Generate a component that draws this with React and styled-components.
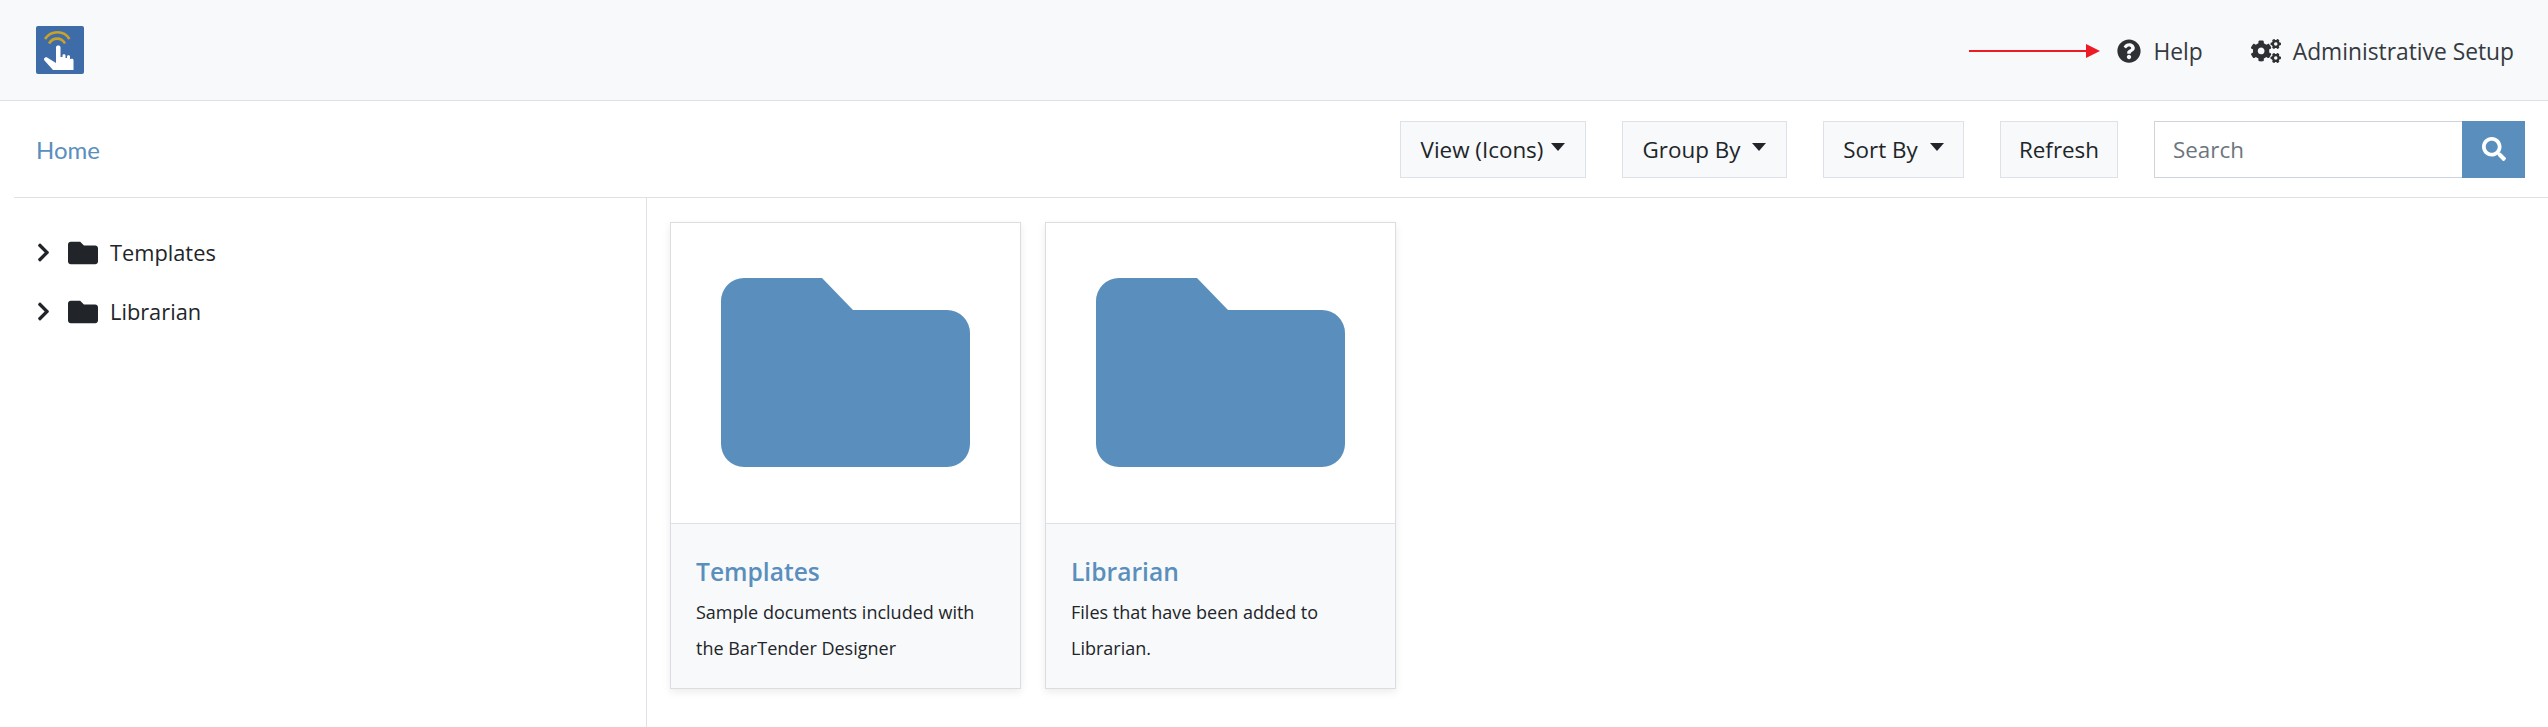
import React from "react";
import styled, { createGlobalStyle } from "styled-components";
import { FaChevronRight, FaFolder, FaQuestionCircle, FaCogs, FaSearch } from "react-icons/fa";

const GlobalStyle = createGlobalStyle`
  html, body {
    margin: 0;
    padding: 0;
    background: #fff;
    font-family: "Open Sans", "Noto Sans", sans-serif;
    color: #212529;
  }
`;

const folders = [
  {
    name: "Templates",
    lines: ["Sample documents included with", "the BarTender Designer"],
  },
  {
    name: "Librarian",
    lines: ["Files that have been added to", "Librarian."],
  },
];

function Logo() {
  return (
    <LogoBox>
      <svg width="48" height="48" viewBox="0 0 48 48">
        <rect width="48" height="48" rx="2" fill="#3e6ca8" />
        <g fill="none" stroke="#c9a227" strokeWidth="2.6">
          <path d="M9 13C15 4 28 4 33.500 13" />
          <path d="M13 17.500C17 11 25.500 11 29 17.500" />
        </g>
        <path
          d="M20 21.500c0-2.600 4.500-2.600 4.500 0V31h2v-1.500c0-1.800 3-1.800 3 0V32h1.500v-1.500c0-1.800 3-1.800 3 0V33l2-.3c1-.1 1.500.6 1.500 1.500V44H17L8.500 34.500c-1.500-2 1-4.300 3-2.800L20 37Z"
          fill="#fff"
        />
      </svg>
    </LogoBox>
  );
}

function Arrow() {
  return (
    <svg width="132" height="16" viewBox="0 0 132 16">
      <line x1="0" y1="8" x2="120" y2="8" stroke="#ed1c24" strokeWidth="2" />
      <polygon points="117,1 131,8 117,15" fill="#ed1c24" />
    </svg>
  );
}

function FolderShape() {
  return (
    <svg width="249" height="189" viewBox="0 0 249 189">
      <path
        d="M23 0H101L132 32H226A23 23 0 0 1 249 55V166A23 23 0 0 1 226 189H23A23 23 0 0 1 0 166V23A23 23 0 0 1 23 0Z"
        fill="#5a8fbd"
      />
    </svg>
  );
}

export default function App() {
  return (
    <Page>
      <GlobalStyle />
      <TopBar>
        <Logo />
        <TopActions>
          <Arrow />
          <TopLink>
            <FaQuestionCircle size={24} />
            Help
          </TopLink>
          <TopLink $wide>
            <FaCogs size={30} />
            Administrative Setup
          </TopLink>
        </TopActions>
      </TopBar>
      <ToolBar>
        <HomeLink>Home</HomeLink>
        <Tools>
          <ToolButton $width={186} $caretGap={8}>
            View (Icons)
            <Caret />
          </ToolButton>
          <ToolButton $width={165} $caretGap={12}>
            Group By
            <Caret />
          </ToolButton>
          <ToolButton $width={141} $caretGap={12}>
            Sort By
            <Caret />
          </ToolButton>
          <ToolButton $width={118}>Refresh</ToolButton>
          <SearchGroup>
            <SearchInput placeholder="Search" />
            <SearchButton>
              <FaSearch size={24} />
            </SearchButton>
          </SearchGroup>
        </Tools>
      </ToolBar>
      <Body>
        <Sidebar>
          {folders.map((f) => (
            <TreeRow key={f.name}>
              <FaChevronRight size={21} />
              <FaFolder size={30} />
              <TreeLabel>{f.name}</TreeLabel>
            </TreeRow>
          ))}
        </Sidebar>
        <CardArea>
          {folders.map((f) => (
            <Card key={f.name}>
              <CardImage>
                <FolderShape />
              </CardImage>
              <CardFooter>
                <CardTitle>{f.name}</CardTitle>
                {f.lines.map((line) => (
                  <CardText key={line}>{line}</CardText>
                ))}
              </CardFooter>
            </Card>
          ))}
        </CardArea>
      </Body>
    </Page>
  );
}

const Page = styled.div`
  width: 2548px;
  height: 727px;
  overflow: hidden;
  display: flex;
  flex-direction: column;
`;

const TopBar = styled.header`
  height: 101px;
  box-sizing: border-box;
  display: flex;
  align-items: center;
  justify-content: space-between;
  padding: 2px 34px 0 36px;
  background: #f8f9fa;
  border-bottom: 1px solid #dee2e6;
`;

const LogoBox = styled.div`
  width: 48px;
  height: 48px;
  display: flex;
  margin-top: -2px;
`;

const TopActions = styled.div`
  display: flex;
  align-items: center;
`;

const TopLink = styled.a`
  display: flex;
  align-items: center;
  gap: 12px;
  margin-left: ${(p) => (p.$wide ? "48px" : "16px")};
  font-size: 22.8px;
  color: #343a40;
  svg {
    color: #2f3033;
  }
`;

const ToolBar = styled.div`
  height: 97px;
  box-sizing: border-box;
  margin-left: 14px;
  padding: 0 23px 0 22px;
  display: flex;
  align-items: center;
  justify-content: space-between;
  border-bottom: 1px solid #dee2e6;
`;

const HomeLink = styled.a`
  font-family: "Lato", sans-serif;
  font-size: 24px;
  color: #5a8fbd;
`;

const Tools = styled.div`
  display: flex;
  align-items: center;
  gap: 36px;
`;

const ToolButton = styled.button`
  width: ${(p) => p.$width}px;
  height: 57px;
  padding: 0;
  display: flex;
  align-items: center;
  justify-content: center;
  gap: ${(p) => p.$caretGap || 0}px;
  font-family: inherit;
  font-size: 22.4px;
  color: #212529;
  background: #f8f9fa;
  border: 1px solid #dee2e6;
`;

const Caret = styled.span`
  width: 0;
  height: 0;
  border-left: 7px solid transparent;
  border-right: 7px solid transparent;
  border-top: 8px solid #212529;
  margin-bottom: 5px;
`;

const SearchGroup = styled.div`
  display: flex;
  height: 57px;
`;

const SearchInput = styled.input`
  width: 308px;
  box-sizing: border-box;
  padding: 0 18px;
  font-family: inherit;
  font-size: 22.4px;
  color: #212529;
  border: 1px solid #ced4da;
  border-right: none;
  outline: none;
  &::placeholder {
    color: #6c757d;
  }
`;

const SearchButton = styled.button`
  width: 63px;
  padding: 0;
  display: flex;
  align-items: center;
  justify-content: center;
  color: #fff;
  background: #5a8fbd;
  border: none;
`;

const Body = styled.div`
  flex: 1;
  display: flex;
  margin-left: 14px;
`;

const Sidebar = styled.nav`
  width: 633px;
  padding: 25px 0 0 19px;
  box-sizing: border-box;
  border-right: 1px solid #dee2e6;
`;

const TreeRow = styled.div`
  height: 59px;
  display: flex;
  align-items: center;
  color: #212529;
  svg:first-child {
    margin-right: 14px;
  }
`;

const TreeLabel = styled.span`
  margin-left: 12px;
  font-size: 21.8px;
`;

const CardArea = styled.main`
  flex: 1;
  display: flex;
  align-items: flex-start;
  gap: 24px;
  padding: 24px 0 0 23px;
`;

const Card = styled.article`
  width: 351px;
  box-sizing: border-box;
  border: 1px solid #dcdde0;
  box-shadow: 0 3px 8px rgba(0, 0, 0, 0.08);
`;

const CardImage = styled.div`
  height: 300px;
  padding-bottom: 2px;
  box-sizing: border-box;
  display: flex;
  align-items: center;
  justify-content: center;
  background: #fff;
`;

const CardFooter = styled.div`
  height: 165px;
  box-sizing: border-box;
  padding: 30px 25px 0;
  background: #f8f9fa;
  border-top: 1px solid #dee2e6;
`;

const CardTitle = styled.h5`
  margin: 0 0 4px;
  font-size: 24.6px;
  font-weight: 600;
  line-height: 36px;
  color: #5a8fbd;
`;

const CardText = styled.p`
  margin: 0;
  font-size: 18px;
  line-height: 36px;
  color: #212529;
`;
